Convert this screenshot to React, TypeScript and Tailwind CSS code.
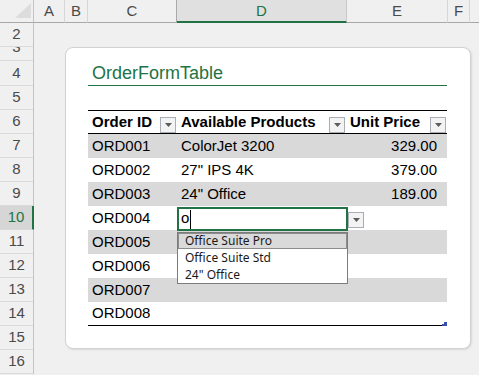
import React from "react";

const GREEN = "#217346";

function FilterBtn() {
  return (
    <div className="w-[16px] h-[16px] border border-[#a9aeb5] bg-[#f3f3f3] flex items-center justify-center shrink-0">
      <svg width="7" height="4" viewBox="0 0 7 4">
        <path d="M0 0h7L3.5 4z" fill="#5c5c5c" />
      </svg>
    </div>
  );
}

const rows = [
  { id: "ORD001", p: "ColorJet 3200", price: "329.00" },
  { id: "ORD002", p: '27" IPS 4K', price: "379.00" },
  { id: "ORD003", p: '24" Office', price: "189.00" },
  { id: "ORD004", p: "", price: "", active: true },
  { id: "ORD005", p: "", price: "" },
  { id: "ORD006", p: "", price: "" },
  { id: "ORD007", p: "", price: "" },
  { id: "ORD008", p: "", price: "" },
];

const rowHeads: { n: string; h: string; clip?: boolean; active?: boolean }[] = [
  { n: "2", h: "h-[24px]" },
  { n: "3", h: "h-[14px]", clip: true },
  { n: "4", h: "h-[25px]" },
  { n: "5", h: "h-[24px]" },
  { n: "6", h: "h-[24px]" },
  { n: "7", h: "h-[24px]" },
  { n: "8", h: "h-[24px]" },
  { n: "9", h: "h-[24px]" },
  { n: "10", h: "h-[24px]", active: true },
  { n: "11", h: "h-[24px]" },
  { n: "12", h: "h-[24px]" },
  { n: "13", h: "h-[24px]" },
  { n: "14", h: "h-[24px]" },
  { n: "15", h: "h-[24px]" },
  { n: "16", h: "h-[24px]" },
];

export default function App() {
  return (
    <div className="w-[479px] h-[375px] overflow-hidden bg-[#f0f0f0] font-['Liberation_Sans',sans-serif] text-black">
      {/* Column header bar */}
      <div className="flex h-[23px] text-[15px] text-[#4a4a4a]">
        <div className="w-[34px] h-full border-r border-b border-[#c4c4c4] border-b-[#a8a8a8] flex items-start justify-end">
          <svg width="33" height="22" viewBox="0 0 33 22">
            <path d="M15 18H31V3z" fill="#dcdcdc" />
          </svg>
        </div>
        <div className="w-[31px] h-full border-r border-r-[#d6d6d6] border-b border-b-[#a8a8a8] flex items-center justify-center">A</div>
        <div className="w-[23px] h-full border-r border-r-[#d6d6d6] border-b border-b-[#a8a8a8] flex items-center justify-center">B</div>
        <div className="w-[89px] h-full border-r border-r-[#a8a8a8] border-b border-b-[#a8a8a8] flex items-center justify-center">C</div>
        <div className="w-[170px] h-full bg-[#e0e0e0] border-r border-r-[#c8c8c8] border-b-2 border-b-[#217346] flex items-center justify-center text-[#217346] pt-[1px]">D</div>
        <div className="w-[101px] h-full border-r border-r-[#d6d6d6] border-b border-b-[#a8a8a8] flex items-center justify-center">E</div>
        <div className="w-[22px] h-full border-r border-r-[#d6d6d6] border-b border-b-[#a8a8a8] flex items-center justify-center">F</div>
        <div className="flex-1 h-full border-b border-b-[#a8a8a8]"></div>
      </div>

      <div className="flex">
        {/* Row headers */}
        <div className="w-[34px] border-r border-[#c4c4c4] flex flex-col text-[15px] text-[#4a4a4a]">
          {rowHeads.map((r) =>
            r.clip ? (
              <div key={r.n} className={`${r.h} overflow-hidden border-b border-[#dadada]`}>
                <div className="h-[24px] -mt-[12px] flex items-center justify-center">{r.n}</div>
              </div>
            ) : r.active ? (
              <div
                key={r.n}
                className={`${r.h} flex items-center justify-center bg-[#d6d6d6] text-[#217346] border-b border-b-[#dadada] -mr-[1px] border-r-2 border-r-[#217346]`}
              >
                {r.n}
              </div>
            ) : (
              <div key={r.n} className={`${r.h} flex items-center justify-center border-b border-[#dadada]`}>
                {r.n}
              </div>
            )
          )}
        </div>

        {/* Canvas */}
        <div className="flex-1 pt-[24px] pl-[31px]">
          <div className="w-[406px] h-[302px] bg-white rounded-[8px] border border-[#d2d2d2] shadow-[1px_1px_2px_rgba(0,0,0,0.10)] pl-[22px] pt-[13px]">
            {/* Title */}
            <div className="w-[359px] h-[25px] border-b border-[#217346] flex items-center pl-[4px] text-[18px] text-[#217346]">
              OrderFormTable
            </div>
            <div className="h-[24px]"></div>

            {/* Table */}
            <div className="relative w-[359px] text-[15px]">
              <div className="flex h-[24px] border-t border-b border-black font-bold">
                <div className="w-[89px] flex items-end justify-between">
                  <span className="self-center pl-[4px]">Order ID</span>
                  <div className="mr-[1px]"><FilterBtn /></div>
                </div>
                <div className="w-[170px] flex items-end justify-between">
                  <span className="self-center pl-[4px]">Available Products</span>
                  <div className="mr-[2px]"><FilterBtn /></div>
                </div>
                <div className="w-[100px] flex items-end justify-between">
                  <span className="self-center pl-[3px]">Unit Price</span>
                  <div className="mr-[1px]"><FilterBtn /></div>
                </div>
              </div>

              {rows.map((r, i) => (
                <div
                  key={r.id}
                  className={`flex h-[24px] ${i % 2 === 0 ? "bg-[#d9d9d9]" : "bg-white"} ${i === rows.length - 1 ? "border-b border-black" : ""}`}
                >
                  <div className="w-[89px] flex items-center pl-[4px]">{r.id}</div>
                  {r.active ? (
                    <div className="relative w-[170px] flex items-center pl-[4px] z-10">
                      <div className="absolute left-0 top-[1px] w-[171px] h-[24px] border-2 border-[#217346]"></div>
                      <span className="relative">o</span>
                      <span className="relative w-[1px] h-[19px] bg-black ml-[1px] mt-[2px]"></span>
                      <div className="absolute left-[171px] top-[6px]">
                        <FilterBtn />
                      </div>
                      <div className="absolute left-0 top-[26px] w-[171px] bg-white border border-[#7c7c7c] font-['Noto_Sans',sans-serif] text-[12px] text-[#1a1a1a] leading-none">
                        <div className="h-[16px] bg-[#dadada] border border-[#8c8c8c] flex items-center pl-[6px]">Office Suite Pro</div>
                        <div className="h-[17px] flex items-center pl-[7px]">Office Suite Std</div>
                        <div className="h-[17px] flex items-center pl-[7px]">24" Office</div>
                      </div>
                    </div>
                  ) : (
                    <div className="w-[170px] flex items-center pl-[4px]">{r.p}</div>
                  )}
                  <div className="w-[100px] flex items-center justify-end pr-[10px]">{r.price}</div>
                </div>
              ))}

              <svg className="absolute right-0 bottom-0" width="5" height="4" viewBox="0 0 5 4">
                <path d="M2 0H5V4H0V2H2z" fill="#3a4fb3" />
              </svg>
            </div>
          </div>
        </div>
      </div>
    </div>
  );
}
